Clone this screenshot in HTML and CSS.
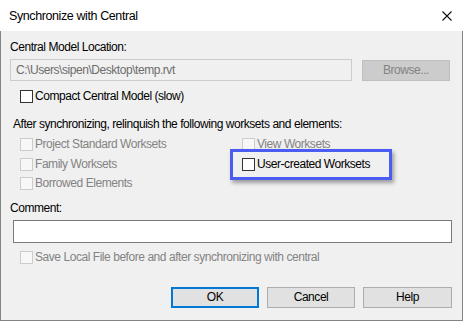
FILE: index.html
```html
<!DOCTYPE html>
<html>
<head>
<meta charset="utf-8">
<link rel="stylesheet" href="styles.css">
</head>
<body>
<div class="window">
  <div class="titlebar">
    <span class="title">Synchronize with Central</span>
    <svg class="close" width="10" height="10" viewBox="0 0 10 10"><path d="M0.5 0.5 L9.5 9.5 M9.5 0.5 L0.5 9.5" stroke="#111" stroke-width="1.1" fill="none"/></svg>
  </div>
  <div class="content">
    <div class="label first">Central Model Location:</div>
    <div class="location-row">
      <div class="path-input">C:\Users\sipen\Desktop\temp.rvt</div>
      <div class="btn disabled">Browse...</div>
    </div>
    <label class="check compact"><span class="box"></span><span>Compact Central Model (slow)</span></label>
    <div class="label after">After synchronizing, relinquish the following worksets and elements:</div>
    <div class="grid">
      <label class="check off"><span class="box"></span><span>Project Standard Worksets</span></label>
      <label class="check off"><span class="box"></span><span>View Worksets</span></label>
      <label class="check off"><span class="box"></span><span>Family Worksets</span></label>
      <label class="check highlight"><span class="box"></span><span>User-created Worksets</span><span class="mark"></span></label>
      <label class="check off"><span class="box"></span><span>Borrowed Elements</span></label>
    </div>
    <div class="label comment">Comment:</div>
    <div class="comment-input"></div>
    <label class="check off save"><span class="box"></span><span>Save Local File before and after synchronizing with central</span></label>
    <div class="buttons">
      <div class="btn default">OK</div>
      <div class="btn">Cancel</div>
      <div class="btn help">Help</div>
    </div>
  </div>
</div>
</body>
</html>
```
FILE: styles.css
```css
* { box-sizing: border-box; }
html, body { margin: 0; padding: 0; }
body {
  font-family: "Liberation Sans", Arial, sans-serif;
  font-size: 12px;
  letter-spacing: -0.45px;
  color: #000;
  background: #fff;
}
.window {
  width: 463px;
  height: 321px;
  display: flex;
  flex-direction: column;
}
.titlebar {
  height: 31px;
  flex: none;
  background: #fff;
  display: flex;
  align-items: center;
  justify-content: space-between;
  padding: 0 11px 0 9px;
}
.title { font-size: 12.5px; line-height: 16px; letter-spacing: -0.4px; }
.close { display: block; }
.content {
  flex: 1;
  background: #f0f0f0;
  border: 1px solid #858585;
  border-top: none;
  padding: 0 10px 0 9px;
  display: flex;
  flex-direction: column;
}
.label { line-height: 16px; }
.label.first { margin-top: 8px; }
.location-row {
  margin-top: 4px;
  display: flex;
  gap: 10px;
  align-items: flex-end;
}
.path-input {
  width: 342px;
  height: 22px;
  border: 1px solid #cccccc;
  background: #f0f0f0;
  color: #6d6d6d;
  padding: 0 0 0 5px;
  line-height: 20px;
}
.btn {
  width: 88px;
  height: 21px;
  border: 1px solid #adadad;
  background: #e1e1e1;
  text-align: center;
  line-height: 19px;
}
.btn.disabled {
  background: #cccccc;
  border-color: #bfbfbf;
  color: #838383;
}
.btn.default {
  border: 2px solid #0078d7;
  line-height: 17px;
}
.btn.help { width: 89px; }
.check {
  display: flex;
  align-items: center;
  gap: 2px;
  height: 15px;
  line-height: 15px;
  position: relative;
}
.box {
  width: 13px;
  height: 13px;
  flex: none;
  border: 1px solid #333333;
  background: #fff;
}
.check.off { color: #838383; }
.check.off .box { border-color: #cccccc; background: #f7f7f7; }
.check.compact { margin: 8px 0 0 10px; }
.label.after { margin-top: 12px; margin-left: 3px; }
.grid {
  margin: 5px 0 0 10px;
  display: grid;
  grid-template-columns: 222px auto;
  row-gap: 4.5px;
}
.mark {
  position: absolute;
  left: -12px;
  top: -8px;
  width: 162px;
  height: 31px;
  border: 3px solid #4a5cf2;
  box-shadow: 2px 3px 4px rgba(0, 0, 0, 0.35);
}
.label.comment { margin-top: 9px; }
.comment-input {
  margin: 4px 0 0 3px;
  height: 23px;
  background: #fff;
  border: 1px solid #7a7a7a;
}
.check.save { margin: 7px 0 0 10px; }
.buttons {
  margin-top: 22px;
  display: flex;
  justify-content: flex-end;
  gap: 8px;
}
```
